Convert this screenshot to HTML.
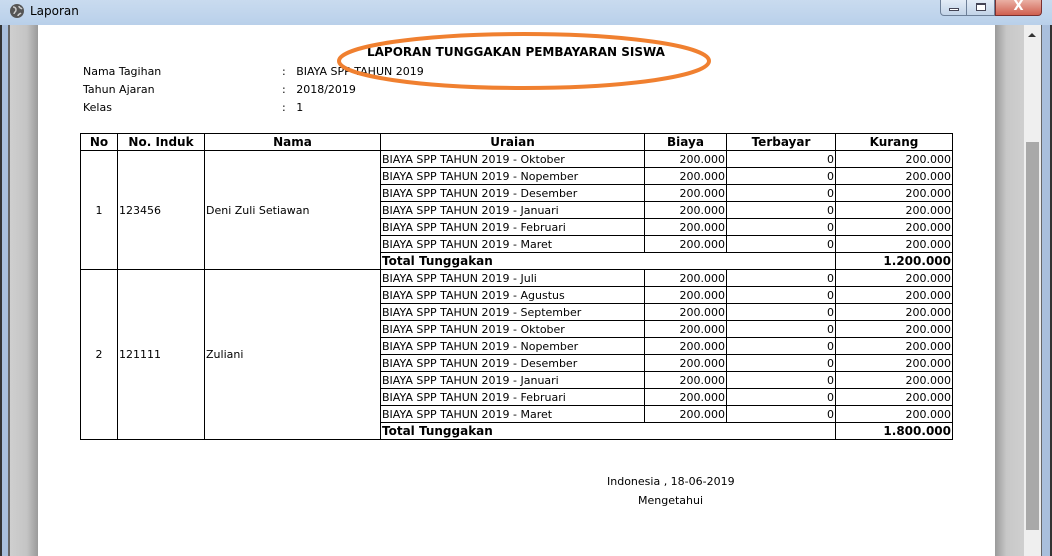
<!DOCTYPE html>
<html><head><meta charset="utf-8"><style>
*{margin:0;padding:0;box-sizing:border-box}
body{width:1052px;height:556px;overflow:hidden;position:relative;background:#fff;font-family:"DejaVu Sans","Liberation Sans",sans-serif;font-size:11px;color:#000}
.abs{position:absolute}
#title{left:0;top:0;width:1052px;height:25px;background:linear-gradient(#c9dbef,#b9d0ea)}
#lf{left:0;top:25px;width:10px;height:531px;background:linear-gradient(90deg,#333 0 2px,#a9bfdc 2px 8px,#666 8px 10px)}
#lg{left:10px;top:25px;width:28px;height:531px;background:linear-gradient(90deg,#cfcfcf,#c4c4c4 60%,#9a9a9a)}
#rg{left:995px;top:25px;width:29px;height:531px;background:linear-gradient(90deg,#9a9a9a,#c8c8c8 40%,#cfcfcf)}
#sb{left:1024px;top:25px;width:17px;height:531px;background:#efefef}
#th{left:1026px;top:142px;width:13px;height:388px;background:#a9a9a9}
#rf{left:1041px;top:25px;width:11px;height:531px;background:linear-gradient(90deg,#666 0 1px,#a9bfdc 1px 9px,#333 9px)}
table{position:absolute;left:80px;top:133px;border-collapse:collapse;table-layout:fixed;width:873px}
td,th{border:1px solid #000;height:17px;line-height:15px;padding:0 1px;white-space:nowrap;overflow:hidden;font-size:11px}
th{font-weight:bold;text-align:center;font-size:12px}
.r{text-align:right}.c{text-align:center}.b{font-weight:bold;font-size:12px}
</style></head><body>
<div id="title" class="abs"></div>
<svg class="abs" style="left:9px;top:3px" width="16" height="16" viewBox="0 0 16 16"><circle cx="8" cy="8" r="7" fill="#555"/><path d="M4 4c2 0 3 1 3 3s-2 2-2 4M10 3c0 2 2 2 3 3M9 13c0-2 2-2 3-3" stroke="#ccc" stroke-width="1.5" fill="none"/></svg>
<div class="abs" style="left:30px;top:4px;font-size:12px">Laporan</div>
<div class="abs" style="left:940px;top:0;width:27px;height:16px;border:1px solid #6d7f98;border-top:0;border-radius:0 0 0 4px;background:linear-gradient(#e3ecf7,#c2d3e8)"><div style="margin:8px auto 0;width:10px;height:3px;background:#fff;border:1px solid #445"></div></div>
<div class="abs" style="left:966px;top:0;width:29px;height:16px;border:1px solid #6d7f98;border-top:0;background:linear-gradient(#e3ecf7,#c2d3e8)"><div style="margin:3px auto 0;width:10px;height:8px;border:1px solid #445;border-top-width:2px;background:#fff"></div></div>
<div class="abs" style="left:995px;top:0;width:47px;height:16px;border:1px solid #7a3030;border-top:0;border-radius:0 0 4px 0;background:linear-gradient(#eab0a4,#d06050);color:#fff;font-weight:bold;font-size:13px;text-align:center;line-height:14px">X</div>
<div id="lf" class="abs"></div><div id="lg" class="abs"></div>
<div id="rg" class="abs"></div><div id="sb" class="abs"></div><div id="th" class="abs"></div><div id="rf" class="abs"></div>
<div class="abs" style="left:1028px;top:33px;width:0;height:0;border-left:4px solid transparent;border-right:4px solid transparent;border-bottom:4px solid #333"></div>

<div class="abs" style="left:367px;top:45px;font-size:12px;font-weight:bold">LAPORAN TUNGGAKAN PEMBAYARAN SISWA</div>
<div class="abs" style="left:83px;top:63px;line-height:18px">Nama Tagihan<br>Tahun Ajaran<br>Kelas</div>
<div class="abs" style="left:282px;top:63px;line-height:18px">:&nbsp;&nbsp; BIAYA SPP TAHUN 2019<br>:&nbsp;&nbsp; 2018/2019<br>:&nbsp;&nbsp; 1</div>
<svg class="abs" style="left:330px;top:28px" width="390" height="66"><ellipse cx="194" cy="33" rx="185" ry="27" fill="none" stroke="#f08030" stroke-width="4"/></svg>

<table>
<colgroup><col style="width:37px"><col style="width:87px"><col style="width:176px"><col style="width:264px"><col style="width:82px"><col style="width:109px"><col style="width:117px"></colgroup>
<tr><th>No</th><th>No. Induk</th><th>Nama</th><th>Uraian</th><th>Biaya</th><th>Terbayar</th><th>Kurang</th></tr>
<tr><td rowspan="7" class="c">1</td><td rowspan="7">123456</td><td rowspan="7">Deni Zuli Setiawan</td><td>BIAYA SPP TAHUN 2019 - Oktober</td><td class="r">200.000</td><td class="r">0</td><td class="r">200.000</td></tr>
<tr><td>BIAYA SPP TAHUN 2019 - Nopember</td><td class="r">200.000</td><td class="r">0</td><td class="r">200.000</td></tr>
<tr><td>BIAYA SPP TAHUN 2019 - Desember</td><td class="r">200.000</td><td class="r">0</td><td class="r">200.000</td></tr>
<tr><td>BIAYA SPP TAHUN 2019 - Januari</td><td class="r">200.000</td><td class="r">0</td><td class="r">200.000</td></tr>
<tr><td>BIAYA SPP TAHUN 2019 - Februari</td><td class="r">200.000</td><td class="r">0</td><td class="r">200.000</td></tr>
<tr><td>BIAYA SPP TAHUN 2019 - Maret</td><td class="r">200.000</td><td class="r">0</td><td class="r">200.000</td></tr>
<tr><td colspan="3" class="b">Total Tunggakan</td><td class="r b">1.200.000</td></tr>
<tr><td rowspan="10" class="c">2</td><td rowspan="10">121111</td><td rowspan="10">Zuliani</td><td>BIAYA SPP TAHUN 2019 - Juli</td><td class="r">200.000</td><td class="r">0</td><td class="r">200.000</td></tr>
<tr><td>BIAYA SPP TAHUN 2019 - Agustus</td><td class="r">200.000</td><td class="r">0</td><td class="r">200.000</td></tr>
<tr><td>BIAYA SPP TAHUN 2019 - September</td><td class="r">200.000</td><td class="r">0</td><td class="r">200.000</td></tr>
<tr><td>BIAYA SPP TAHUN 2019 - Oktober</td><td class="r">200.000</td><td class="r">0</td><td class="r">200.000</td></tr>
<tr><td>BIAYA SPP TAHUN 2019 - Nopember</td><td class="r">200.000</td><td class="r">0</td><td class="r">200.000</td></tr>
<tr><td>BIAYA SPP TAHUN 2019 - Desember</td><td class="r">200.000</td><td class="r">0</td><td class="r">200.000</td></tr>
<tr><td>BIAYA SPP TAHUN 2019 - Januari</td><td class="r">200.000</td><td class="r">0</td><td class="r">200.000</td></tr>
<tr><td>BIAYA SPP TAHUN 2019 - Februari</td><td class="r">200.000</td><td class="r">0</td><td class="r">200.000</td></tr>
<tr><td>BIAYA SPP TAHUN 2019 - Maret</td><td class="r">200.000</td><td class="r">0</td><td class="r">200.000</td></tr>
<tr><td colspan="3" class="b">Total Tunggakan</td><td class="r b">1.800.000</td></tr>
</table>

<div class="abs" style="left:607px;top:475px">Indonesia , 18-06-2019</div>
<div class="abs" style="left:638px;top:494px">Mengetahui</div>
</body></html>
